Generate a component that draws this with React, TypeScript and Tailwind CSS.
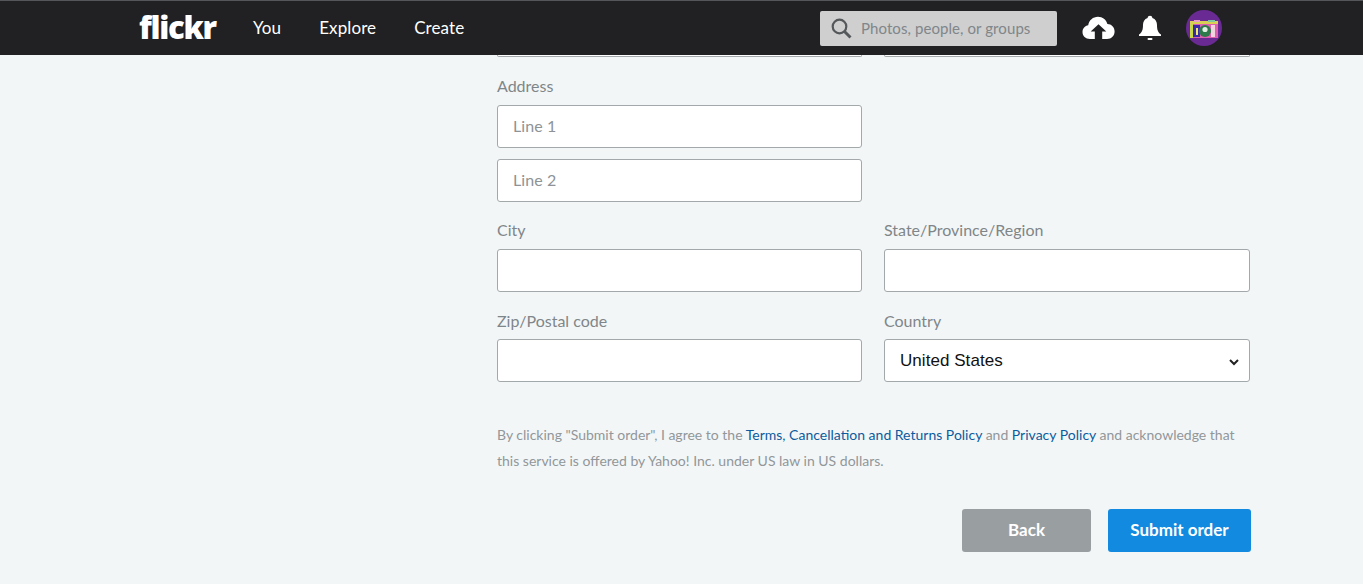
const inputClass =
  'block w-full h-[43px] rounded-[3px] border border-[#a3a8ab] bg-white px-[15px] pb-[2px] text-[16px] tracking-[0.1px] text-[#333] placeholder:text-[#8d9396] outline-none'

function Label({ children, tight }: { children: React.ReactNode; tight?: boolean }) {
  return (
    <label className={`block h-[19px] text-[16px] leading-[19px] text-[#7f8689] ${tight ? 'mb-[9px]' : 'mb-[10px]'}`}>
      {children}
    </label>
  )
}

function UploadIcon() {
  return (
    <svg width="33" height="24" viewBox="0 0 33 24">
      <path
        fill="#fff"
        d="M8 23 C3.5 23 0.5 20 0.5 16 C0.5 12.5 3 9.8 6.2 9.3 C7 4.3 11 0.8 16 0.8 C20.6 0.8 24.2 3.7 25.4 8 C29.4 8 32.6 11.2 32.6 15.5 C32.6 19.8 29.5 23 25 23 L20.2 23 L20.2 15.5 L24.3 15.5 L16.5 8.2 L8.7 15.5 L12.8 15.5 L12.8 23 Z"
      />
    </svg>
  )
}

function BellIcon() {
  return (
    <svg width="24" height="26" viewBox="0 0 24 26">
      <path
        fill="#fff"
        d="M12 0.8 C13.4 0.8 14.2 1.6 14.4 2.9 C17.6 3.9 19 6.6 19 10 C19 14.5 19.8 17.2 23 19.6 L23 21 L1 21 L1 19.6 C4.2 17.2 5 14.5 5 10 C5 6.6 6.4 3.9 9.6 2.9 C9.8 1.6 10.6 0.8 12 0.8 Z"
      />
      <rect x="9.5" y="23" width="5" height="2" rx="1" fill="#fff" />
    </svg>
  )
}

function Avatar() {
  return (
    <svg width="36" height="36" viewBox="0 0 36 36">
      <circle cx="18" cy="18" r="18" fill="#6a2a94" />
      <rect x="4" y="11" width="28" height="3" fill="#d9cf55" />
      <rect x="8" y="10" width="6" height="2" fill="#e8a0c8" />
      <rect x="22" y="10" width="7" height="2" fill="#7fc8a0" />
      <rect x="4" y="14" width="28" height="14" fill="#dc5fb0" />
      <rect x="4" y="14" width="3" height="14" fill="#c8d84a" />
      <rect x="7" y="15" width="7" height="12" fill="#3a2aa8" />
      <rect x="25" y="15" width="4" height="12" fill="#f2d4df" />
      <rect x="10" y="18" width="2" height="7" fill="#f2e86a" />
      <circle cx="19" cy="21" r="6" fill="#2d7a4a" />
      <circle cx="19" cy="19.5" r="2.6" fill="#e4efe6" />
    </svg>
  )
}

function Header() {
  return (
    <header className="relative z-10 h-[55px] bg-[#212124] border-t border-[#55565a] flex items-center text-white">
      <div className="ml-[139px] w-[114px] text-[31px] leading-none font-extrabold tracking-[-1.3px] font-['Open_Sans',sans-serif] pb-[2px]">
        flickr
      </div>
      <nav className="flex gap-[38px] text-[17px] tracking-[0.1px]">
        <span>You</span>
        <span>Explore</span>
        <span>Create</span>
      </nav>
      <div className="ml-auto mr-[141px] flex items-center">
        <div className="flex items-center w-[237px] h-[35px] rounded-[2px] bg-[#cfcfcf] pl-[11px] gap-[9px] text-[15px] tracking-[0.08px] text-[#80868a]">
          <svg width="21" height="21" viewBox="0 0 21 21" fill="none" stroke="#55585a" strokeWidth="2.2">
            <circle cx="8.5" cy="8.5" r="6.8" />
            <path d="M13.5 13.5 L19.5 19.5" strokeWidth="3" />
          </svg>
          <span>Photos, people, or groups</span>
        </div>
        <div className="ml-[25px] flex items-center">
          <UploadIcon />
        </div>
        <div className="ml-[23px] flex items-center">
          <BellIcon />
        </div>
        <div className="ml-[24px] flex items-center">
          <Avatar />
        </div>
      </div>
    </header>
  )
}

export default function App() {
  return (
    <div className="h-[584px] overflow-hidden bg-[#f3f6f7] font-['Lato','Open_Sans',sans-serif]">
      <Header />
      <form className="ml-[497px] w-[753px]">
        {/* bottoms of the row that has scrolled under the header */}
        <div className="grid grid-cols-[365px_366px] gap-x-[22px]">
          <div className="h-[2px] rounded-b-[3px] border border-t-0 border-[#a3a8ab] bg-white" />
          <div className="h-[2px] rounded-b-[3px] border border-t-0 border-[#a3a8ab] bg-white" />
        </div>

        <div className="pt-[19px] grid grid-cols-[365px_366px] gap-x-[22px]">
          <div>
            <Label>Address</Label>
            <input className={inputClass} placeholder="Line 1" />
            <input className={`${inputClass} mt-[11px]`} placeholder="Line 2" />
          </div>
        </div>

        <div className="mt-[18px] grid grid-cols-[365px_366px] gap-x-[22px] gap-y-[19px]">
          <div>
            <Label>City</Label>
            <input className={inputClass} />
          </div>
          <div>
            <Label>State/Province/Region</Label>
            <input className={inputClass} />
          </div>
          <div>
            <Label tight>Zip/Postal code</Label>
            <input className={inputClass} />
          </div>
          <div>
            <Label tight>Country</Label>
            <div className="relative">
              <select className="block w-full h-[43px] appearance-none rounded-[3px] border border-[#a3a8ab] bg-white px-[15px] text-[17px] tracking-[0.05px] text-[#111] font-['Liberation_Sans',sans-serif] outline-none">
                <option>United States</option>
              </select>
              <svg
                className="absolute right-[11px] top-[20px]"
                width="10"
                height="7"
                viewBox="0 0 10 7"
                fill="none"
                stroke="#222"
                strokeWidth="2"
              >
                <path d="M1 1 L5 5 L9 1" />
              </svg>
            </div>
          </div>
        </div>

        <p className="mt-[40px] w-[750px] text-[14px] leading-[26px] text-[#91979a]">
          By clicking "Submit order", I agree to the{' '}
          <a className="text-[#0b5c9e]">Terms, Cancellation and Returns Policy</a> and{' '}
          <a className="text-[#0b5c9e]">Privacy Policy</a> and acknowledge that this service is offered by Yahoo! Inc.
          under US law in US dollars.
        </p>

        <div className="mt-[35px] flex justify-end gap-[17px] w-[754px]">
          <button type="button" className="w-[129px] h-[43px] pb-[2px] rounded-[3px] bg-[#999ea1] text-white text-[17px] font-bold">
            Back
          </button>
          <button type="button" className="w-[143px] h-[43px] pb-[2px] rounded-[3px] bg-[#128ae0] text-white text-[17px] font-bold">
            Submit order
          </button>
        </div>
      </form>
    </div>
  )
}
